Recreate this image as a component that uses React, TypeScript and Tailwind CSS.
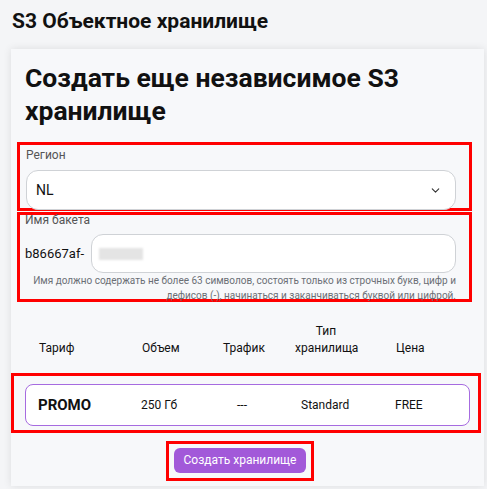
import { ChevronDown } from "lucide-react";

export default function App() {
  return (
    <div
      className="h-[489px] w-[487px] overflow-hidden bg-[#f4f5f7] text-[#111]"
      style={{ fontFamily: "Roboto, 'Noto Sans', sans-serif" }}
    >
      <h1 className="pl-3 pt-[9px] text-[21px] font-bold leading-6">S3 Объектное хранилище</h1>

      <div className="ml-[11px] mt-4 w-[473px] bg-[#f7f8fa] px-[14px] pt-[12px] pb-[5px] shadow-[0_0_8px_rgba(0,0,0,0.1)]">
        <h2 className="text-[26.5px] font-bold leading-[33px]">
          Создать еще независимое S3 хранилище
        </h2>

        {/* Region */}
        <div className="-mx-2 mt-[15px] w-[455px] border-[3px] border-[#ff0000] pl-[6px] pr-[13px]">
          <div className="text-[12px] leading-5 text-[#555]">Регион</div>
          <div className="-mb-[2px] mt-[5px] flex h-[40px] items-center justify-between rounded-xl border border-[#cfd2d6] bg-white pl-[9px] pr-[13px]">
            <span className="text-[14px]">NL</span>
            <ChevronDown size={13} strokeWidth={2} className="text-[#333]" />
          </div>
        </div>

        {/* Bucket name */}
        <div className="-mx-2 mt-px w-[455px] border-[3px] border-[#ff0000] pl-[5px] pr-[13px]">
          <div className="-mt-[2px] text-[12px] leading-[14px] text-[#555]">Имя бакета</div>
          <div className="mt-[7px] flex items-center gap-[7px]">
            <span className="text-[13px]">b86667af-</span>
            <div className="flex h-[39px] flex-1 items-center rounded-xl border border-[#cfd2d6] bg-white pl-[7px]">
              <div className="h-[12px] w-[44px] bg-[#e4e4e4] blur-[1px]" />
            </div>
          </div>
          <p className="-mb-[4px] text-right text-[10px] leading-[15px] text-[#6b6f75]">
            Имя должно содержать не более 63 символов, состоять только из строчных букв, цифр и
            дефисов (-), начинаться и заканчиваться буквой или цифрой.
          </p>
        </div>

        {/* Table header */}
        <div className="mt-[21px] grid grid-cols-[103px_81px_72px_101px_1fr] items-end pl-[14px] text-[12px] leading-[17px]">
          <div>Тариф</div>
          <div>Объем</div>
          <div>Трафик</div>
          <div className="w-[62px] text-center">
            Тип
            <br />
            хранилища
          </div>
          <div>Цена</div>
        </div>

        {/* Tariff row */}
        <div className="-ml-[14px] -mr-[11px] mt-[16px] border-[3px] border-[#ff0000] pl-[11px] pr-[8px] pt-[8px] pb-[4px]">
          <div className="grid h-[42px] grid-cols-[103px_96px_64px_94px_1fr] items-center rounded-lg border border-[#a66be0] bg-white pl-3 text-[12px]">
            <span className="text-[15px] font-bold">PROMO</span>
            <span>250 Гб</span>
            <span>---</span>
            <span>Standard</span>
            <span>FREE</span>
          </div>
        </div>

        <div className="mt-[8px] flex justify-center pr-[15px]">
          <div className="border-[3px] border-[#ff0000] px-[5px] pt-[3px] pb-[5px]">
            <button className="h-[25px] rounded-md bg-[#a259d9] px-[10px] text-[12px] text-white">
              Создать хранилище
            </button>
          </div>
        </div>
      </div>
    </div>
  );
}
